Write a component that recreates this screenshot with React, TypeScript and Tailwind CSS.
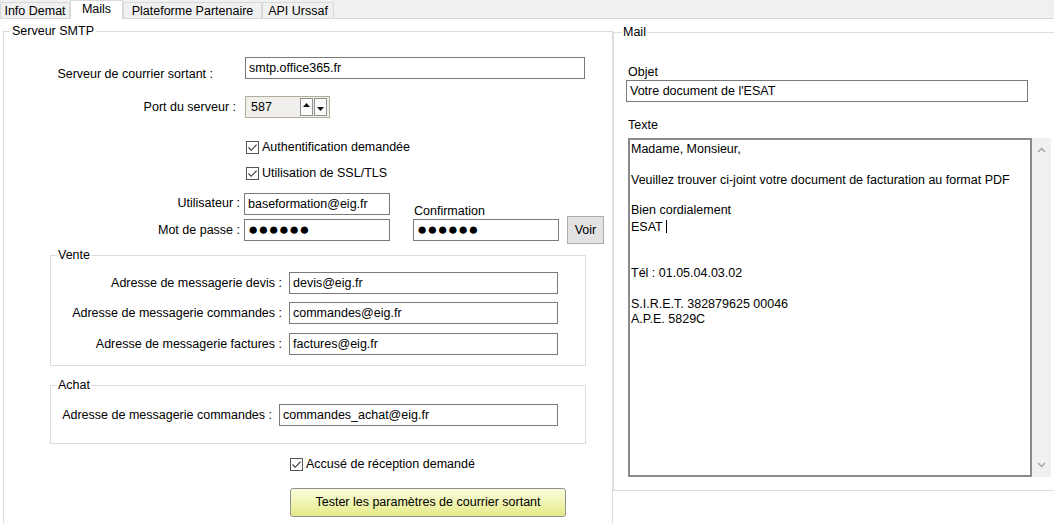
import { ReactNode } from 'react';

const tabs = [
    { label: 'Info Demat', w: 'w-[70px]' },
    { label: 'Mails', w: 'w-[53px]', active: true },
    { label: 'Plateforme Partenaire', w: 'w-[139px]' },
    { label: 'API Urssaf', w: 'w-[72px]' },
];

function Check() {
    return (
        <span className="flex h-[13px] w-[13px] shrink-0 items-center justify-center border border-[#555] bg-white">
            <svg width="11" height="11" viewBox="0 0 11 11">
                <path d="M1.5 5.5 L4.2 8.3 L9.6 2.6" fill="none" stroke="#333" strokeWidth="1.1" />
            </svg>
        </span>
    );
}

function TextBox({ value, className }: { value: ReactNode; className: string }) {
    return (
        <div className={`h-[22px] shrink-0 border border-[#7a7a7a] bg-white pl-[3px] leading-[20px] ${className}`}>
            {value}
        </div>
    );
}

function Dots() {
    return <span className="text-[17px] leading-[20px]">●●●●●●</span>;
}

export default function App() {
    return (
        <div className="h-[523px] w-[1054px] overflow-hidden bg-white font-['Liberation_Sans',Arial,sans-serif] text-[12.5px] leading-[15px] text-black">
            {/* onglets */}
            <div className="flex h-[19px] items-end border-b border-[#d9d9d9] bg-[#f0f0f0]">
                {tabs.map((t) =>
                    t.active ? (
                        <div key={t.label} className={`-mb-px h-[19px] ${t.w} border border-b-0 border-[#d9d9d9] bg-white pt-[1px] text-center`}>
                            {t.label}
                        </div>
                    ) : (
                        <div key={t.label} className={`h-[16px] ${t.w} border border-b-0 border-[#d9d9d9] pt-[1px] text-center`}>
                            {t.label}
                        </div>
                    )
                )}
            </div>

            <div className="flex">
                {/* Serveur SMTP */}
                <fieldset className="ml-[3px] mt-[5px] h-[520px] w-[610px] shrink-0 border border-[#dcdcdc]">
                    <legend className="ml-[6px] px-[2px]">Serveur SMTP</legend>

                    <div className="mt-[18px] flex items-start">
                        <div className="w-[209px] pt-[10px] text-right">Serveur de courrier sortant :</div>
                        <TextBox value="smtp.office365.fr" className="ml-[32px] w-[340px]" />
                    </div>

                    <div className="mt-[14px] flex items-center">
                        <div className="w-[232px] text-right">Port du serveur :</div>
                        <div className="ml-[9px] flex h-[22px] w-[85px] items-center border border-[#b3ab9c] bg-[#f0efeb] pl-[5px]">
                            <span className="flex-1">587</span>
                            <span className="mr-[1px] flex h-[18px] w-[13px] items-start justify-center border border-[#8f8f8f] bg-[#fbfbfb] pt-[4px]">
                                <svg width="7" height="4" viewBox="0 0 7 4"><path d="M0 4 L3.5 0 L7 4 Z" fill="#111" /></svg>
                            </span>
                            <span className="mr-[2px] flex h-[18px] w-[13px] items-end justify-center border border-[#8f8f8f] bg-[#fbfbfb] pb-[4px]">
                                <svg width="7" height="4" viewBox="0 0 7 4"><path d="M0 0 L3.5 4 L7 0 Z" fill="#111" /></svg>
                            </span>
                        </div>
                    </div>

                    <div className="mt-[22px] flex h-[15px] items-center gap-[3px] pl-[242px]">
                        <Check />
                        <span>Authentification demandée</span>
                    </div>
                    <div className="mt-[11px] flex h-[15px] items-center gap-[3px] pl-[242px]">
                        <Check />
                        <span>Utilisation de SSL/TLS</span>
                    </div>

                    <div className="mt-[12px] flex h-[22px] items-start">
                        <div className="w-[236px] pt-[3px] text-right">Utilisateur :</div>
                        <TextBox value="baseformation@eig.fr" className="ml-[4px] w-[146px]" />
                        <div className="ml-[24px] mt-[11px]">Confirmation</div>
                    </div>

                    <div className="mt-[1px] flex items-center">
                        <div className="w-[236px] text-right">Mot de passe :</div>
                        <TextBox value={<Dots />} className="ml-[4px] w-[146px]" />
                        <TextBox value={<Dots />} className="ml-[23px] w-[146px]" />
                        <button className="ml-[8px] h-[28px] w-[37px] border border-[#adadad] bg-[#e1e1e1]">Voir</button>
                    </div>

                    {/* Vente */}
                    <fieldset className="ml-[46px] mt-[4px] w-[536px] border border-[#dcdcdc] pb-[10px]">
                        <legend className="ml-[6px] px-[1px]">Vente</legend>
                        <div className="mt-[9px] flex items-center">
                            <div className="w-[231px] text-right">Adresse de messagerie devis :</div>
                            <TextBox value="devis@eig.fr" className="ml-[7px] w-[269px]" />
                        </div>
                        <div className="mt-[8px] flex items-center">
                            <div className="w-[231px] text-right">Adresse de messagerie commandes :</div>
                            <TextBox value="commandes@eig.fr" className="ml-[7px] w-[269px]" />
                        </div>
                        <div className="mt-[9px] flex items-center">
                            <div className="w-[231px] text-right">Adresse de messagerie factures :</div>
                            <TextBox value="factures@eig.fr" className="ml-[7px] w-[269px]" />
                        </div>
                    </fieldset>

                    {/* Achat */}
                    <fieldset className="ml-[46px] mt-[12px] w-[536px] border border-[#dcdcdc] pb-[17px]">
                        <legend className="ml-[6px] px-[1px]">Achat</legend>
                        <div className="mt-[11px] flex items-center">
                            <div className="w-[221px] text-right">Adresse de messagerie commandes :</div>
                            <TextBox value="commandes_achat@eig.fr" className="ml-[7px] w-[279px]" />
                        </div>
                    </fieldset>

                    <div className="mt-[13px] flex h-[15px] items-center gap-[3px] pl-[286px]">
                        <Check />
                        <span>Accusé de réception demandé</span>
                    </div>

                    <button className="ml-[286px] mt-[16px] h-[29px] w-[276px] rounded-[3px] border border-[#8e8f8f] bg-gradient-to-b from-[#fbfcdc] to-[#e5eb86]">
                        Tester les paramètres de courrier sortant
                    </button>
                </fieldset>

                {/* Mail */}
                <fieldset className="mt-[6px] h-[466px] w-[445px] shrink-0 border border-[#dcdcdc]">
                    <legend className="ml-[8px] px-[1px]">Mail</legend>
                    <div className="ml-[14px] mt-[25px]">Objet</div>
                    <TextBox value="Votre document de l'ESAT" className="ml-[12px] w-[402px]" />
                    <div className="ml-[14px] mt-[16px]">Texte</div>
                    <div className="ml-[14px] mt-[5px] flex h-[339px]">
                        <div className="w-[404px] border-2 border-[#8a8a8a] px-[1px] pt-[2px] leading-[15.3px]">
                            <div>Madame, Monsieur,</div>
                            <div>&nbsp;</div>
                            <div>Veuillez trouver ci-joint votre document de facturation au format PDF</div>
                            <div>&nbsp;</div>
                            <div>Bien cordialement</div>
                            <div>ESAT <span className="inline-block h-[13px] w-px translate-y-[2px] bg-black" /></div>
                            <div>&nbsp;</div>
                            <div>&nbsp;</div>
                            <div>Tél : 01.05.04.03.02</div>
                            <div>&nbsp;</div>
                            <div>S.I.R.E.T. 382879625 00046</div>
                            <div>A.P.E. 5829C</div>
                        </div>
                        <div className="flex w-[19px] flex-col items-center justify-between bg-[#f0f0f0] py-[9px]">
                            <svg width="9" height="6" viewBox="0 0 9 6"><path d="M1 5 L4.5 1.5 L8 5" fill="none" stroke="#a3a3a3" strokeWidth="1.5" /></svg>
                            <svg width="9" height="6" viewBox="0 0 9 6"><path d="M1 1 L4.5 4.5 L8 1" fill="none" stroke="#a3a3a3" strokeWidth="1.5" /></svg>
                        </div>
                    </div>
                </fieldset>
            </div>
        </div>
    );
}
